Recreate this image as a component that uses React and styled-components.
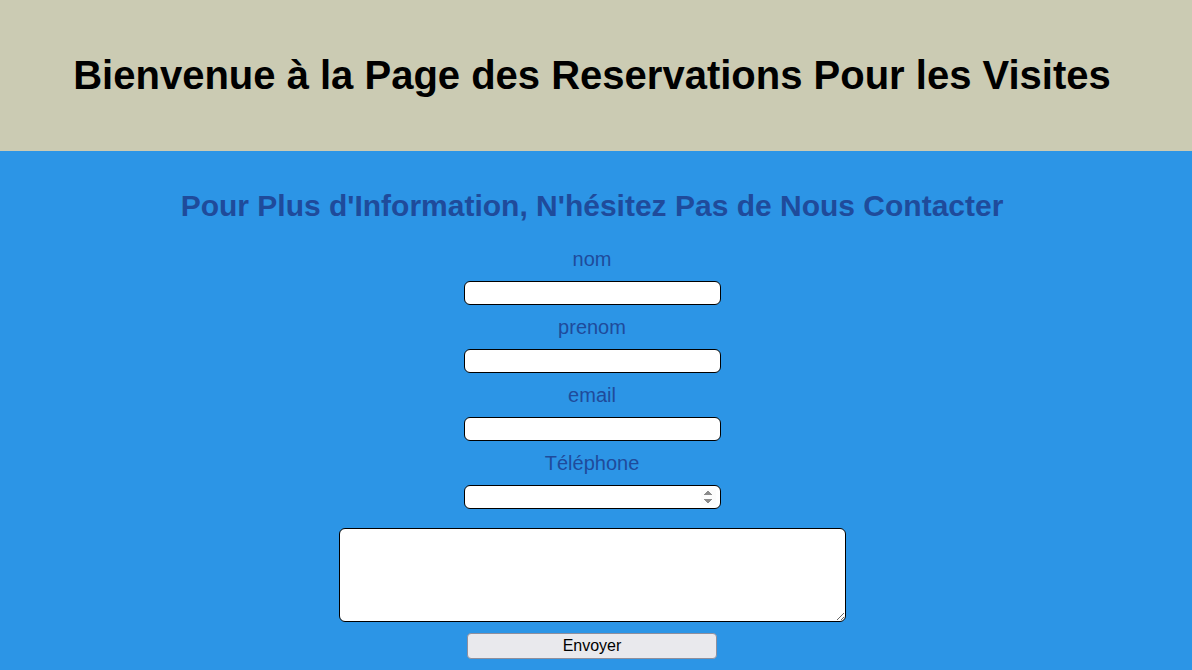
import { createGlobalStyle, styled } from "styled-components";

const GlobalStyle = createGlobalStyle`
   html, body {
      margin: 0;
      padding: 0;
      background-color: #2c95e6;
      font-family: "Liberation Sans", Arial, sans-serif;
   }
`;

const Page = styled.div`
   padding-right: 8px;
`;

const Header = styled.header`
   height: 151px;
   background-color: #cbcbb3;
   display: flex;
   align-items: center;
   justify-content: center;
   margin-right: -8px;
   padding-right: 8px;
`;

const Title = styled.h1`
   margin: 0;
   font-size: 40px;
   font-weight: 700;
   color: #000;
`;

const Main = styled.main`
   display: flex;
   flex-direction: column;
   align-items: center;
   padding-top: 38px;
`;

const Subtitle = styled.h2`
   margin: 0 0 24px 0;
   font-size: 30px;
   font-weight: 700;
   color: #1f4b9b;
`;

const Form = styled.form`
   display: flex;
   flex-direction: column;
   align-items: center;
`;

const Field = styled.div`
   display: flex;
   flex-direction: column;
   align-items: center;
   gap: 10px;
   margin-bottom: 10px;
`;

const Label = styled.label`
   font-size: 20px;
   line-height: 24px;
   color: #1f4b9b;
`;

const Input = styled.input`
   box-sizing: border-box;
   width: 257px;
   height: 24px;
   border: 1px solid #000;
   border-radius: 6px;
   background: #fff;
   padding: 0 4px;
   font-size: 14px;

   &::-webkit-inner-spin-button {
      opacity: 1;
   }
`;

const Message = styled.textarea`
   box-sizing: border-box;
   width: 507px;
   height: 94px;
   margin-top: 9px;
   border: 1px solid #000;
   border-radius: 6px;
   background: #fff;
`;

const Button = styled.button`
   box-sizing: border-box;
   width: 250px;
   height: 26px;
   margin-top: 11px;
   border: 1px solid #8f8f9d;
   border-radius: 4px;
   background-color: #e9e9ed;
   color: #000;
   font-family: "Liberation Sans", Arial, sans-serif;
   font-size: 16px;
`;

const fields = [
   { id: "nom", label: "nom", type: "text" },
   { id: "prenom", label: "prenom", type: "text" },
   { id: "email", label: "email", type: "email" },
   { id: "tel", label: "Téléphone", type: "number" },
];

export default function App() {
   return (
      <Page>
         <GlobalStyle />
         <Header>
            <Title>Bienvenue à la Page des Reservations Pour les Visites</Title>
         </Header>
         <Main>
            <Subtitle>Pour Plus d'Information, N'hésitez Pas de Nous Contacter</Subtitle>
            <Form onSubmit={(e) => e.preventDefault()}>
               {fields.map((f) => (
                  <Field key={f.id}>
                     <Label htmlFor={f.id}>{f.label}</Label>
                     <Input id={f.id} type={f.type} />
                  </Field>
               ))}
               <Message />
               <Button type="submit">Envoyer</Button>
            </Form>
         </Main>
      </Page>
   );
}
